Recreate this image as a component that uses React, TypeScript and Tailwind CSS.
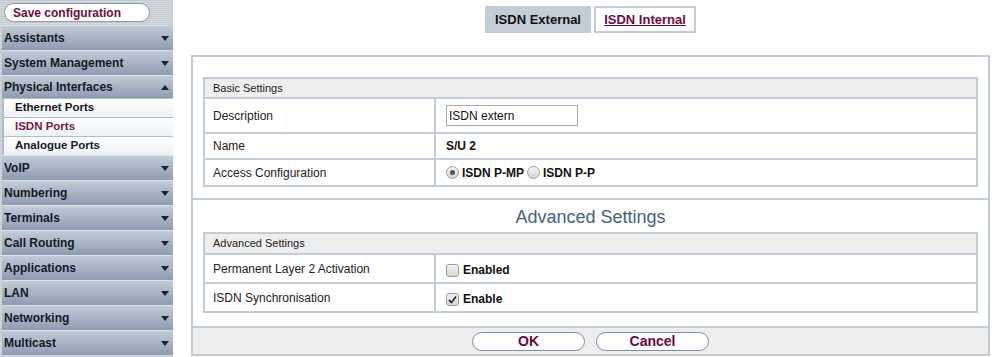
import React from "react";

const font = "font-['Liberation_Sans',Arial,sans-serif]";

const menuTop = ["Assistants", "System Management"];
const menuBottom = [
  "VoIP",
  "Numbering",
  "Terminals",
  "Call Routing",
  "Applications",
  "LAN",
  "Networking",
  "Multicast",
];

const Arrow: React.FC<{ up?: boolean }> = ({ up }) => (
  <svg width="8" height="5" viewBox="0 0 8 5" className="mr-[4px]">
    {up ? (
      <polygon points="0,5 8,5 4,0" fill="#1c2330" />
    ) : (
      <polygon points="0,0 8,0 4,5" fill="#1c2330" />
    )}
  </svg>
);

const MenuHeader: React.FC<{ label: string; up?: boolean; h?: string }> = ({
  label,
  up,
  h = "h-[25px]",
}) => (
  <div
    className={`${h} ml-[2px] flex items-center justify-between border-t border-[#dde3ea] bg-gradient-to-b from-[#c2ccd8] to-[#8c9cb1] pl-[2px] text-[12px] font-bold text-[#141a26]`}
  >
    <span>{label}</span>
    <Arrow up={up} />
  </div>
);

const SubItem: React.FC<{ label: string; active?: boolean }> = ({
  label,
  active,
}) => (
  <div
    className={`h-[19px] ml-[2px] flex items-center border-t border-l-2 border-[#b3bcc8] bg-gradient-to-b from-[#ffffff] to-[#eef1f4] pl-[11px] text-[11.5px] font-bold ${
      active ? "text-[#7a1848]" : "text-[#151a24]"
    }`}
  >
    {label}
  </div>
);

const Checkbox: React.FC<{ checked?: boolean }> = ({ checked }) => (
  <span className="inline-flex h-[13px] w-[13px] items-center justify-center rounded-[3px] border border-[#9a9a9a] bg-gradient-to-b from-[#f4f4f4] to-[#d6d6d6]">
    {checked && (
      <svg width="9" height="9" viewBox="0 0 9 9">
        <path d="M1 5 L3.5 7.5 L8 1.5" stroke="#333" strokeWidth="1.8" fill="none" />
      </svg>
    )}
  </span>
);

const Radio: React.FC<{ checked?: boolean }> = ({ checked }) => (
  <span className="inline-flex h-[13px] w-[13px] items-center justify-center rounded-full border border-[#a0a0a0] bg-gradient-to-b from-[#f6f6f6] to-[#d4d4d4]">
    {checked && <span className="h-[5px] w-[5px] rounded-full bg-[#555]" />}
  </span>
);

const Row: React.FC<{ label: string; h: string; children: React.ReactNode }> = ({
  label,
  h,
  children,
}) => (
  <div className={`flex ${h} border-t-2 border-[#c3cdd8]`}>
    <div className="flex w-[231px] items-center border-r-2 border-[#c3cdd8] pl-[8px] text-[12px] text-[#222]">
      {label}
    </div>
    <div className="flex flex-1 items-center pl-[10px] text-[12px] font-bold text-[#111]">
      {children}
    </div>
  </div>
);

const App: React.FC = () => {
  return (
    <div className={`flex h-[357px] w-[993px] overflow-hidden bg-white ${font}`}>
      <div className="w-[173px] shrink-0 bg-[repeating-linear-gradient(0deg,#c6ccd4_0px,#c6ccd4_1px,#d3d8de_1px,#d3d8de_2px)]">
        <div className="flex h-[25px] items-center pl-[4px]">
          <div className="flex h-[19px] w-[146px] items-center rounded-full border border-[#8e9aac] bg-white pl-[8px] text-[12px] font-bold text-[#6e0b3e]">
            Save configuration
          </div>
        </div>
        {menuTop.map((m) => (
          <MenuHeader key={m} label={m} />
        ))}
        <MenuHeader label="Physical Interfaces" up h="h-[23px]" />
        <SubItem label="Ethernet Ports" />
        <SubItem label="ISDN Ports" active />
        <SubItem label="Analogue Ports" />
        {menuBottom.map((m) => (
          <MenuHeader key={m} label={m} />
        ))}
      </div>

      <div className="flex-1 pl-[18px] pr-[3px]">
        <div className="flex h-[55px] justify-center gap-[3px] pt-[6px]">
          <div className="flex h-[27px] w-[106px] items-center justify-center bg-[#c3cdd8] text-[13px] font-bold text-[#111]">
            ISDN External
          </div>
          <div className="flex h-[27px] w-[102px] items-center justify-center border-2 border-[#c3cdd8] text-[13px] font-bold text-[#6e0b3e] underline">
            ISDN Internal
          </div>
        </div>

        <div className="border-2 border-[#c3cdd8]">
          <div className="px-[10px] pt-[20px] pb-[11px]">
            <div className="border-2 border-t-0 border-[#c3cdd8]">
              <div className="flex h-[20px] items-center border-t-2 border-[#c3cdd8] bg-[#eeeeee] pl-[8px] text-[11px] text-[#222]">
                Basic Settings
              </div>
              <Row label="Description" h="h-[35px]">
                <div className="flex h-[21px] w-[132px] items-center border border-[#a9a9a9] pl-[2px] font-normal text-[#111]">
                  ISDN extern
                </div>
              </Row>
              <Row label="Name" h="h-[26px]">
                S/U 2
              </Row>
              <Row label="Access Configuration" h="h-[27px]">
                <div className="flex items-center gap-[3px]">
                  <Radio checked />
                  <span>ISDN P-MP</span>
                  <Radio />
                  <span>ISDN P-P</span>
                </div>
              </Row>
            </div>
          </div>

          <div className="border-t-2 border-[#c3cdd8] px-[10px] pb-[13px]">
            <div className="flex h-[32px] items-center justify-center pt-[3px] text-[18px] text-[#44617f]">
              Advanced Settings
            </div>
            <div className="border-2 border-t-0 border-[#c3cdd8]">
              <div className="flex h-[21px] items-center border-t-2 border-[#c3cdd8] bg-[#eeeeee] pl-[8px] text-[11px] text-[#222]">
                Advanced Settings
              </div>
              <Row label="Permanent Layer 2 Activation" h="h-[29px]">
                <div className="flex items-center gap-[4px] pt-[3px]">
                  <Checkbox />
                  <span>Enabled</span>
                </div>
              </Row>
              <Row label="ISDN Synchronisation" h="h-[29px]">
                <div className="flex items-center gap-[4px] pt-[3px]">
                  <Checkbox checked />
                  <span>Enable</span>
                </div>
              </Row>
            </div>
          </div>

          <div className="flex h-[28px] items-center justify-center gap-[11px] border-t-2 border-[#c3cdd8] bg-[#eeeeee]">
            <div className="flex h-[19px] w-[113px] items-center justify-center rounded-full border border-[#7f8ea4] bg-white text-[14px] font-bold text-[#6a0a35]">
              OK
            </div>
            <div className="flex h-[19px] w-[113px] items-center justify-center rounded-full border border-[#7f8ea4] bg-white text-[14px] font-bold text-[#6a0a35]">
              Cancel
            </div>
          </div>
        </div>
      </div>
    </div>
  );
};

export default App;
